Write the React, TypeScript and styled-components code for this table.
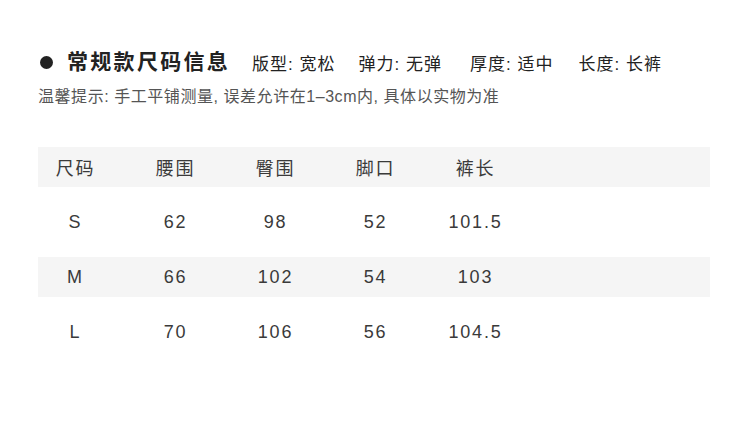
import React from "react";
import styled, { createGlobalStyle } from "styled-components";

const Global = createGlobalStyle`
  html, body { margin: 0; padding: 0; background: #ffffff; }
  body { font-family: "Liberation Sans", "Noto Sans CJK SC", sans-serif; }
`;

const Page = styled.div`
  width: 750px;
  height: 425px;
  box-sizing: border-box;
  padding: 47px 40px 0 38px;
`;

const HeadRow = styled.div`
  display: flex;
  align-items: center;
  height: 30px;
  margin-left: 2px;
`;

const Dot = styled.span`
  width: 13px;
  height: 13px;
  border-radius: 50%;
  background: #222;
  margin-right: 14px;
  flex: none;
`;

const Title = styled.h1`
  margin: 0 22px 0 0;
  font-size: 21px;
  font-weight: 700;
  letter-spacing: 2.3px;
  color: #222;
  line-height: 30px;
`;

const Spec = styled.span`
  font-size: 17px;
  letter-spacing: 1px;
  color: #222;
  margin-right: ${(p: { $gap: number }) => p.$gap}px;
  white-space: pre;
`;

const Note = styled.p`
  margin: 10px 0 0 0;
  font-size: 16px;
  line-height: 20px;
  letter-spacing: 0.55px;
  color: #555;
`;

const Table = styled.div`
  margin-top: 40px;
  width: 672px;
  display: flex;
  flex-direction: column;
  gap: 15px;
`;

const Row = styled.div<{ $shade: boolean }>`
  height: 40px;
  display: grid;
  grid-template-columns: repeat(5, 75px);
  column-gap: 25px;
  align-items: center;
  background: ${(p) => (p.$shade ? "#f5f5f5" : "transparent")};
`;

const Cell = styled.span`
  text-align: center;
  font-size: 18px;
  letter-spacing: 1.8px;
  color: #3a3a3a;
  white-space: nowrap;
`;

const specs: [string, number][] = [
  ["版型: 宽松", 23],
  ["弹力: 无弹", 28],
  ["厚度: 适中", 25],
  ["长度: 长裤", 0],
];

const rows: string[][] = [
  ["尺码", "腰围", "臀围", "脚口", "裤长"],
  ["S", "62", "98", "52", "101.5"],
  ["M", "66", "102", "54", "103"],
  ["L", "70", "106", "56", "104.5"],
];

export default function App() {
  return (
    <>
      <Global />
      <Page>
        <HeadRow>
          <Dot />
          <Title>常规款尺码信息</Title>
          {specs.map(([t, g]) => (
            <Spec key={t} $gap={g}>
              {t}
            </Spec>
          ))}
        </HeadRow>
        <Note>温馨提示: 手工平铺测量, 误差允许在1–3cm内, 具体以实物为准</Note>
        <Table>
          {rows.map((r, i) => (
            <Row key={i} $shade={i % 2 === 0}>
              {r.map((c, j) => (
                <Cell key={j}>{c}</Cell>
              ))}
            </Row>
          ))}
        </Table>
      </Page>
    </>
  );
}
